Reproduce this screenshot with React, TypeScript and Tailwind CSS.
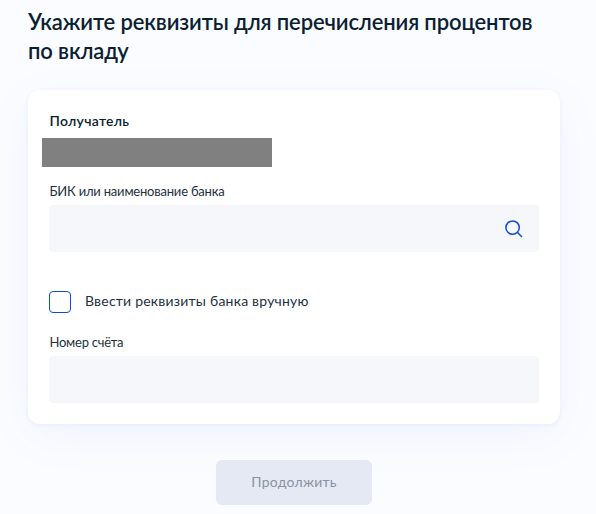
import React from "react";

export default function App() {
  return (
    <main className="h-[514px] w-[596px] overflow-hidden bg-[#fbfcff] pl-7 pr-9 pt-[7px] font-['Lato','Liberation_Sans',sans-serif] text-[#0b1f33]">
      <h1 className="whitespace-nowrap text-[22px] font-semibold leading-[29px] tracking-[-0.14px]">
        Укажите реквизиты для перечисления процентов
        <br />
        по вкладу
      </h1>
      <section className="mt-[25px] h-[334px] rounded-xl bg-white px-[21px] pt-[21px] shadow-[0_1px_4px_rgba(40,90,220,0.07),0_12px_48px_rgba(50,120,220,0.06)]">
        <h2 className="pl-[0.5px] text-[14px] font-semibold leading-5 tracking-[0.28px]">Получатель</h2>
        <div className="-ml-[7px] mt-[7px] h-[29px] w-[230px] bg-[#808080]" />
        <label className="mt-[14px] block pl-[0.5px] text-[13px] leading-5 tracking-[-0.21px] text-[#1f3040]">БИК или наименование банка</label>
        <div className="mt-[4px] flex h-[47px] items-center justify-end rounded bg-[#f5f7fb] pr-4">
          <svg width="18" height="18" viewBox="0 0 18 18" fill="none" stroke="#0d4cd3" strokeWidth="1.5">
            <circle cx="7.6" cy="7.6" r="6.7" />
            <path d="M12.3 12.3 17 17" />
          </svg>
        </div>
        <label className="mt-[39px] flex items-center gap-[14px] text-[14px] leading-[22px] tracking-[0.22px] text-[#1f3040]">
          <span className="size-[22px] rounded border border-[#0d4cd3] bg-white" />
          <span className="-mt-0.5">Ввести реквизиты банка вручную</span>
        </label>
        <label className="mt-[19px] block pl-[0.5px] text-[13px] leading-5 tracking-[-0.24px] text-[#1f3040]">Номер счёта</label>
        <div className="mt-[4px] h-[47px] rounded bg-[#f5f7fb]" />
      </section>
      <button className="mx-auto mt-9 block h-[45px] w-[156px] rounded-md bg-[#e5e9f4] pb-0.5 text-[14px] tracking-[0.25px] text-[#8a929d]">Продолжить</button>
    </main>
  );
}
